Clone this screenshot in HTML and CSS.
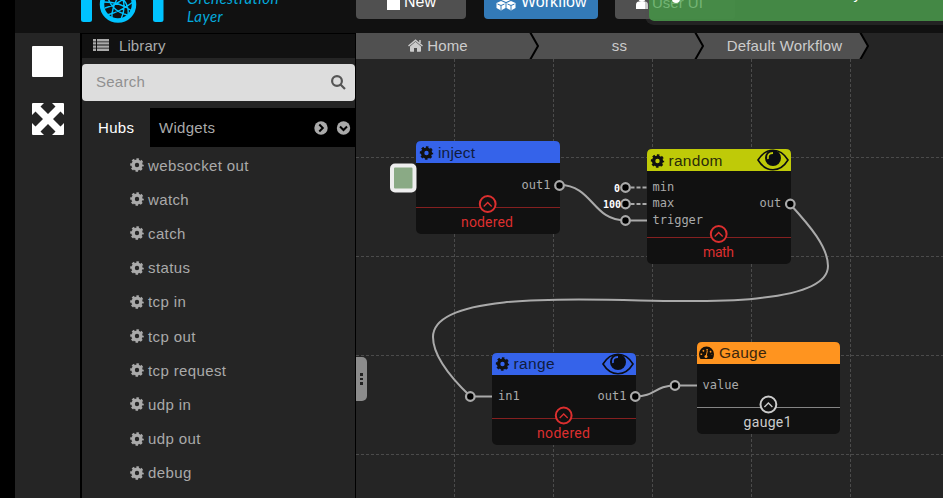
FILE: index.html
```html
<!DOCTYPE html>
<html lang="en">
<head>
<meta charset="utf-8">
<title>IOT Orchestration Layer</title>
<link rel="stylesheet" href="styles.css">
</head>
<body>
<svg class="defs" aria-hidden="true">
  <symbol id="gear" viewBox="-7 -7 14 14"><circle r="3.9" fill="none" stroke="currentColor" stroke-width="3.4"/><circle r="5.8" fill="none" stroke="currentColor" stroke-width="2" stroke-dasharray="2.5 2.055" stroke-dashoffset="1.25"/></symbol>
  <symbol id="eye" viewBox="0 0 32 22"><path d="M1 11C9-2 23-2 31 11C23 24 9 24 1 11Z" fill="none" stroke="currentColor" stroke-width="1.6"/><circle cx="16" cy="9" r="8" fill="currentColor"/><path d="M11 10Q10 4 16 4" fill="none" stroke="var(--glint)" stroke-width="1.8"/></symbol>
  <symbol id="toggle" viewBox="-10 -10 20 20"><circle r="7.9" fill="#111" stroke="currentColor" stroke-width="2"/><path d="M-4 2.5L0-1.5L4 2.5" fill="none" stroke="currentColor" stroke-width="1.3"/></symbol>
</svg>
<div class="app">
  <header class="header">
    <svg class="logo" viewBox="0 0 84 24"><g fill="#00c3ff"><rect x="1" y="-10" width="11" height="32" rx="2.5"/><rect x="73" y="-10" width="10.500" height="32" rx="2.500"/></g><g fill="none" stroke="#00c3ff"><circle cx="38" cy="4.500" r="16" stroke-width="4.500"/><path stroke-width="1.400" d="M27-7Q29 10 47 15M25 8Q37 5 50-6M33-9Q50 1 48 15M24 2Q40 2 52 11M44-10Q31 4 32 19M27 15Q40 12 53 2M39-9Q48 5 41 19"/></g></svg>
    <div class="tagline">Orchestration<br>Layer</div>
    <nav class="menu">
      <button class="btn btn-new"><i class="square"></i>New</button>
      <button class="btn btn-flow"><svg width="20" height="18" viewBox="0 0 20 18"><path fill="#fff" d="M10 0l4.500 2v5L10 9 5.500 7V2zM5 8l4.500 2v5L5 17.500.5 15v-5zM15 8l4.500 2v5L15 17.500 10.500 15v-5z"/><path fill="none" stroke="#337ab7" d="M1.500 11L5 12.500 8.500 11M5 12.500V17M11.500 11l3.500 1.500 3.500-1.500M15 12.500V17"/></svg>Workflow</button>
      <button class="btn btn-user"><svg width="12" height="14" viewBox="0 0 12 14"><circle cx="6" cy="3.500" r="3.500" fill="#fff"/><path fill="#fff" d="M0 14v-4q0-3.500 3-3.500h6q3 0 3 3.500v4z"/></svg><span class="user-label">User UI</span></button>
    </nav>
    <div class="toast"><span class="toast-icon"></span><span class="toast-text">Saved successfully</span></div>
  </header>
  <main class="body">
    <aside class="rail">
      <span class="stop"></span>
      <svg width="32" height="32" viewBox="0 0 32 32"><path fill="#fff" d="M1 0H12L8.500 3.500 16 11l7.500-7.500L20 0H31q1 0 1 1V12l-3.500-3.500L21 16l7.500 7.500L32 20V31q0 1-1 1H20l3.500-3.500L16 21l-7.500 7.500L12 32H1q-1 0-1-1V20l3.500 3.500L11 16 3.500 8.500 0 12V1Q0 0 1 0Z"/></svg>
    </aside>
    <section class="library">
      <div class="lib-title"><svg width="16" height="12" viewBox="0 0 16 12"><path fill="#aaa" d="M0 0h3v2.400H0zM4 0h12v2.400H4zM0 3.200h3v2.400H0zM4 3.200h12v2.400H4zM0 6.400h3v2.400H0zM4 6.400h12v2.400H4zM0 9.600h3V12H0zM4 9.600h12V12H4z"/></svg><span>Library</span></div>
      <div class="search"><span>Search</span><svg width="15" height="15" viewBox="0 0 15 15" fill="none" stroke="#555" stroke-width="2.200"><circle cx="6" cy="6" r="4.900"/><path d="M9.500 9.500L14 14"/></svg></div>
      <div class="tabs"><span class="tab active">Hubs</span><span class="tab">Widgets</span>
        <svg class="arrows" width="37" height="14" viewBox="0 0 37 14"><g fill="#aaa"><circle cx="7" cy="7" r="6.700"/><circle cx="29.500" cy="7" r="6.700"/></g><path d="M5.300 3.500L8.800 7 5.300 10.500M26 5.500L29.500 9 33 5.500" fill="none" stroke="#000" stroke-width="2"/></svg>
      </div>
      <ul class="items">
        <li><svg><use href="#gear"/></svg>websocket out</li>
        <li><svg><use href="#gear"/></svg>watch</li>
        <li><svg><use href="#gear"/></svg>catch</li>
        <li><svg><use href="#gear"/></svg>status</li>
        <li><svg><use href="#gear"/></svg>tcp in</li>
        <li><svg><use href="#gear"/></svg>tcp out</li>
        <li><svg><use href="#gear"/></svg>tcp request</li>
        <li><svg><use href="#gear"/></svg>udp in</li>
        <li><svg><use href="#gear"/></svg>udp out</li>
        <li><svg><use href="#gear"/></svg>debug</li>
      </ul>
    </section>
    <section class="workspace">
      <div class="crumbs">
        <div class="crumb home"><svg width="15" height="13" viewBox="0 0 15 13"><path fill="#ccc" d="M7.500 2.800L13 7.400V12q0 .7-.7.700H9V9H6v3.700H2.700Q2 12.700 2 12V7.400z"/><path fill="none" stroke="#ccc" stroke-width="1.500" d="M.5 7L7.500 1.200 14.500 7M12 1v3"/></svg>Home</div>
        <div class="crumb">ss</div>
        <div class="crumb">Default Workflow</div>
        <svg class="seps" viewBox="0 0 520 26"><path d="M504 0l8 13-8 13h16V0z" fill="#252525"/><path d="M174-1l8 14L174 27M339-1l8 14L339 27M504-1l8 14L504 27" fill="none" stroke="#000" stroke-width="2"/></svg>
      </div>
      <svg class="canvas" viewBox="356 59 587 439">
        <path class="grid" d="M454.500 59V498M553.500 59V498M652.500 59V498M751.500 59V498M850.500 59V498M356 157.500H943M356 256.500H943M356 355.500H943M356 454.500H943"/>
        <g class="node">
          <rect class="box" x="416" y="141" width="144" height="93" rx="5"/>
          <path class="blue" d="M416 163V146q0-5 5-5H555q5 0 5 5v17z"/>
          <path class="rule rule-red" d="M416 207.500H560"/>
          <use href="#gear" x="419.500" y="146" width="14" height="14" class="ink"/>
          <text class="title blue-ink" x="438" y="158" textLength="37">inject</text>
          <text class="port" x="521.500" y="189">out1</text>
          <use href="#toggle" x="477.700" y="194" width="20" height="20" class="red"/>
          <text class="group red" x="461" y="227" textLength="52">nodered</text>
          <rect class="trigger" x="392" y="165.500" width="22.500" height="25" rx="3"/>
        </g>
        <g class="node">
          <rect class="box" x="647" y="149" width="144" height="115" rx="5"/>
          <path fill="#bfca08" d="M647 171V154q0-5 5-5H786q5 0 5 5v17z"/>
          <path class="rule rule-red" d="M647 237.500H791"/>
          <use href="#gear" x="650.500" y="154" width="14" height="14" class="ink"/>
          <text class="title lime-ink" x="668.500" y="166" textLength="54">random</text>
          <use href="#eye" x="757" y="149" width="32" height="22" class="eye lime"/>
          <text class="port" x="652.500" y="191">min</text><text class="port" x="652.500" y="207">max</text><text class="port" x="652.500" y="224">trigger</text><text class="port" x="759.500" y="207">out</text>
          <use href="#toggle" x="708.700" y="224" width="20" height="20" class="red"/>
          <text class="group red" x="703" y="257" textLength="31">math</text>
        </g>
        <g class="node">
          <rect class="box" x="492" y="353" width="144" height="92" rx="5"/>
          <path class="blue" d="M492 375V358q0-5 5-5H631q5 0 5 5v17z"/>
          <path class="rule rule-red" d="M492 418.500H636"/>
          <use href="#gear" x="495.500" y="357" width="14" height="14" class="ink"/>
          <text class="title blue-ink" x="513.500" y="369" textLength="41">range</text>
          <use href="#eye" x="602" y="353" width="32" height="22" class="eye sky"/>
          <text class="port" x="498" y="400">in1</text><text class="port" x="597.500" y="400">out1</text>
          <use href="#toggle" x="553.700" y="405.500" width="20" height="20" class="red"/>
          <text class="group red" x="537" y="438" textLength="53">nodered</text>
        </g>
        <g class="node">
          <rect class="box" x="697" y="342" width="143" height="92" rx="5"/>
          <path fill="#ff941f" d="M697 364V347q0-5 5-5H835q5 0 5 5v17z"/>
          <path class="rule rule-pale" d="M697 407.500H840"/>
          <path fill="#181008" d="M700.500 359q-1.500-2-1.500-5a7.500 7.500 0 0 1 15 0q0 3-1.500 5z"/>
          <path stroke="#ff941f" stroke-width="1.600" stroke-dasharray="1.600 2.300" fill="none" d="M701.300 355a5.200 5.200 0 0 1 10.400 0"/><path stroke="#ff941f" d="M706 357l1.300-6"/><circle cx="706" cy="356.500" r="1.500" fill="#ff941f"/>
          <text class="title orange-ink" x="719" y="358" textLength="47.500">Gauge</text>
          <text class="port" x="702.500" y="389">value</text>
          <use href="#toggle" x="758.400" y="394.500" width="20" height="20" class="pale"/>
          <text class="group pale" x="743.500" y="427" textLength="48">gauge1</text>
        </g>
        <g class="wire">
          <path d="M559.500 185C593 185 592 220.500 625.500 220.500H647"/>
          <path d="M790 204C810 226 828 247 828 266C828 305 700 302 640 300.500C553 298 433 296 433 337C433 356 450 377 470.500 396.500H492"/>
          <path d="M635.500 396.500C655 396.500 655 385.500 675 385.500H697"/>
          <path d="M625.500 187.500H647M625.500 204H647" stroke-dasharray="4 2" stroke-dashoffset="1"/>
        </g>
        <g class="pin"><circle cx="559.500" cy="185.500" r="4.300"/><circle cx="625.500" cy="187.500" r="4.300"/><circle cx="625.500" cy="204" r="4.300"/><circle cx="625.500" cy="220.500" r="4.300"/><circle cx="790.300" cy="204" r="4.300"/><circle cx="470.300" cy="396.500" r="4.300"/><circle cx="635.300" cy="396.500" r="4.300"/><circle cx="675" cy="385.500" r="4.300"/></g>
        <text class="value" x="614" y="191.500">0</text><text class="value" x="603" y="207.500" textLength="18">100</text>
      </svg>
      <div class="handle"><i></i><i></i><i></i></div>
    </section>
  </main>
</div>
</body>
</html>
```
FILE: styles.css
```css
* { box-sizing: border-box; }
body { margin: 0; background: #000; font: 15px "Liberation Sans", sans-serif; color: #aaa; overflow: hidden; }
.defs { position: absolute; width: 0; height: 0; }
.app { height: 498px; margin-left: 15px; display: flex; flex-direction: column; }
.header { position: relative; height: 33px; flex: none; background: #111; display: flex; align-items: flex-start; overflow: hidden; }
.logo { width: 84px; height: 24px; margin-left: 65px; }
.tagline { width: 169px; margin: -10px 0 0 23px; font: italic 15px/17.500px Lato, sans-serif; letter-spacing: .45px; color: #04a9dc; }
.menu { display: flex; margin-top: -15px; }
.btn { height: 34px; padding: 0; border: 0; border-radius: 4px; background: #505050; color: #fff; font: 16px "Liberation Sans", sans-serif; display: flex; align-items: center; }
.btn-new { width: 110px; padding-left: 31px; gap: 4px; }
.square { width: 13px; height: 13px; background: #fff; margin-top: 3px; }
.btn-flow { width: 114px; margin-left: 18px; padding-left: 12px; gap: 5px; background: #337ab7; }
.btn-user { width: 120px; margin-left: 17px; padding-left: 21px; gap: 4px; }
.user-label { position: relative; z-index: 1; color: #74b575; font-size: 15px; }
.toast { position: absolute; left: 634px; top: -40px; width: 310px; height: 61px; border-radius: 0 0 0 5px; background: rgba(70, 140, 71, .97); box-shadow: 0 0 0 4px rgba(80, 80, 80, .3); }
.toast-icon { position: absolute; left: 23px; top: 35px; width: 8px; height: 8px; border-radius: 50%; background: #fff; z-index: 2; }
.toast-text { position: absolute; right: 98px; top: 25px; color: #fff; }
.body { display: flex; flex: 1; min-height: 0; }
.rail { width: 65px; flex: none; background: #252525; padding-top: 13px; display: flex; flex-direction: column; align-items: center; gap: 26px; }
.stop { width: 31px; height: 31px; border-radius: 1px; background: #fff; }
.library { width: 276px; flex: none; background: #252525; border: solid #000; border-width: 1px 1px 0 2px; }
.lib-title { height: 24px; padding-left: 11px; display: flex; align-items: center; gap: 10px; background: #111; letter-spacing: .1px; }
.lib-title svg { margin-top: -3px; }
.lib-title span { margin-top: -2px; }
.search { height: 37px; margin-top: 6px; padding: 0 9px 0 14px; border-radius: 4px; background: #ddd; color: #909090; display: flex; align-items: center; justify-content: space-between; letter-spacing: .25px; }
.search span { margin-top: -2px; }
.tabs { height: 39px; margin-top: 7px; background: #000; display: flex; align-items: center; }
.tab { height: 39px; line-height: 40px; padding-left: 9px; letter-spacing: .3px; }
.tab.active { width: 68px; padding-left: 16px; background: #252525; color: #fff; }
.arrows { margin-left: auto; margin-right: 4px; }
.items { list-style: none; margin: 1px 0 0; padding: 0 0 0 48px; }
.items li { height: 34.200px; display: flex; align-items: center; gap: 4px; letter-spacing: .38px; white-space: nowrap; }
.items svg { width: 14px; height: 14px; color: #aaa; }
.workspace { position: relative; flex: 1; min-width: 0; background: #252525; }
.crumbs { position: relative; width: 512px; height: 26px; background: #505050; color: #ccc; display: flex; }
.crumb { width: 165px; height: 25px; padding-right: 2px; display: flex; align-items: center; justify-content: center; letter-spacing: .15px; }
.crumb.home { width: 182px; padding-right: 18px; gap: 4px; }
.seps { position: absolute; left: 0; top: 0; width: 520px; height: 26px; }
.canvas { display: block; width: 587px; height: 439px; }
.grid { fill: none; stroke: #4b4b4b; stroke-dasharray: 3 2; }
.box { fill: #111; }
.trigger { fill: #8aaa85; stroke: #eee; stroke-width: 4; }
.blue { fill: #3563ea; }
.rule { stroke-width: 1; shape-rendering: crispEdges; }
.rule-red { stroke: #852020; }
.rule-pale { stroke: #858585; }
.title { font: 15.500px "Liberation Sans", sans-serif; fill: currentColor; }
.group { font: 14px Roboto, sans-serif; fill: currentColor; }
.port { font: 12px "DejaVu Sans Mono", monospace; fill: #aaa; }
.value { font: bold 10px "DejaVu Sans Mono", monospace; fill: #fff; }
.red { color: #dc2f2f; }
.pale { color: #ccc; }
.ink { color: #111; }
.blue-ink { color: #101c3e; }
.lime-ink { color: #292c08; }
.orange-ink { color: #3a260e; }
.eye { color: #0b0d12; }
.lime { --glint: #bfca08; }
.sky { --glint: #3563ea; }
.wire { fill: none; stroke: #aaa; stroke-width: 2; }
.pin { fill: #000; stroke: #aaa; stroke-width: 2.200; }
.handle { position: absolute; left: 0; top: 324px; width: 11px; height: 44px; background: #8c8c8c; border-radius: 0 5px 5px 0; display: flex; flex-direction: column; align-items: center; justify-content: center; gap: 2px; }
.handle i { width: 3px; height: 2.500px; background: #222; }
```
